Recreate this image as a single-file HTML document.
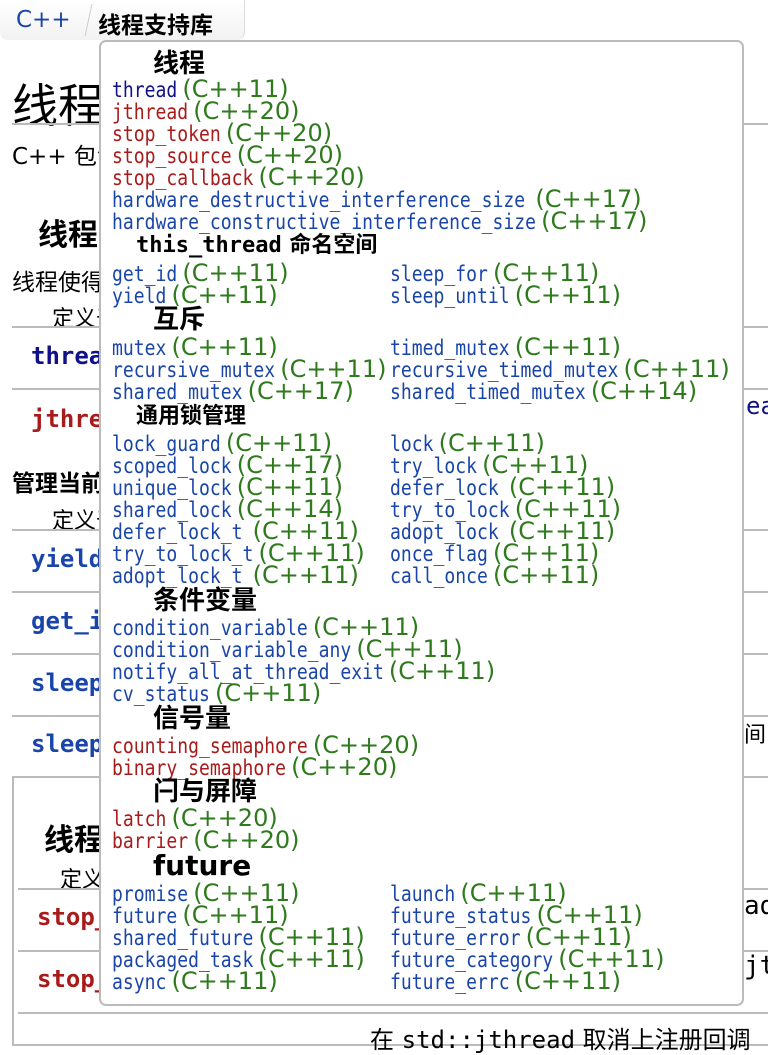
<!DOCTYPE html>
<html><head><meta charset="utf-8">
<style>
*{margin:0;padding:0;box-sizing:border-box}
body{width:768px;height:1030px;overflow:hidden;background:#fff;position:relative;font-family:"DejaVu Sans","Noto Sans CJK SC",sans-serif;color:#000}
.a{position:absolute;white-space:nowrap}
.hl{position:absolute;height:2px;background:#bbb}
.bm{font-family:"DejaVu Sans Mono",monospace;font-weight:bold;font-size:24px}
#pop{position:absolute;left:99px;top:40px;width:645px;height:966px;background:#fff;border:2px solid #bbb;border-radius:7px}
.r{position:absolute;height:22px;line-height:22px;white-space:nowrap}
.m{display:inline-block;font-family:"DejaVu Sans Mono",monospace;font-size:21px;color:#1a45a8;transform:scaleX(0.86);transform-origin:0 50%;margin-right:calc(var(--n) * -1.77px)}
.m.d{color:#101088}
.m.red{color:#a81b1b}
.g{font-family:"DejaVu Sans",sans-serif;font-size:24px;color:#2e7a1c}
.h{position:absolute;font-weight:bold;font-family:"DejaVu Sans","Noto Sans CJK SC",sans-serif;line-height:26px;white-space:nowrap}
</style></head><body>
<!-- breadcrumb tab -->
<div class="a" style="left:0;top:0;width:245px;height:40px;background:linear-gradient(#fff,#f2f2f2);border-radius:0 0 8px 8px;border-right:1px solid #ddd"></div>
<div class="a" style="left:16px;top:7px;font-size:23px;color:#1a45a8">C++</div>
<div class="a" style="left:88px;top:4px;width:1px;height:32px;background:#ccc;transform:skewX(-12deg)"></div>
<div class="a" style="left:98px;top:6px;font-size:23px;font-weight:bold">线程支持库</div>

<!-- background page -->
<div class="a" style="left:12px;top:70px;font-size:46px">线程支持库</div>
<div class="hl" style="left:12px;top:123px;width:756px"></div>
<div class="a" style="left:12px;top:137px;font-size:23px">C++ 包含线程</div>
<div class="a" style="left:38px;top:210px;font-size:30px;font-weight:bold">线程</div>
<div class="a" style="left:12px;top:263px;font-size:23px">线程使得程序</div>
<div class="a" style="left:52px;top:301px;font-size:22px">定义于头文件</div>
<div class="hl" style="left:12px;top:326px;width:756px"></div>
<div class="a bm" style="left:31px;top:342px;color:#101088">thread</div>
<div class="hl" style="left:12px;top:388px;width:756px"></div>
<div class="a bm" style="left:31px;top:405px;color:#a81b1b">jthread</div>
<div class="a" style="left:746px;top:392px;font-size:24px;font-family:'DejaVu Sans Mono',monospace;color:#101088">ea</div>
<div class="a" style="left:12px;top:464px;font-size:23px;font-weight:bold">管理当前线程</div>
<div class="a" style="left:52px;top:503px;font-size:22px">定义于头文件</div>
<div class="hl" style="left:12px;top:529px;width:756px"></div>
<div class="a bm" style="left:31px;top:545px;color:#1a45a8">yield</div>
<div class="hl" style="left:12px;top:591px;width:756px"></div>
<div class="a bm" style="left:31px;top:607px;color:#1a45a8">get_id</div>
<div class="hl" style="left:12px;top:653px;width:756px"></div>
<div class="a bm" style="left:31px;top:669px;color:#1a45a8">sleep_for</div>
<div class="hl" style="left:12px;top:715px;width:756px"></div>
<div class="a bm" style="left:31px;top:730px;color:#1a45a8">sleep_until</div>
<div class="a" style="left:744px;top:717px;font-size:22px">间</div>
<div class="a" style="left:12px;top:776px;width:760px;height:270px;border:2px solid #bbb"></div>
<div class="a" style="left:44px;top:815px;font-size:30px;font-weight:bold">线程</div>
<div class="a" style="left:60px;top:862px;font-size:22px">定义</div>
<div class="hl" style="left:18px;top:888px;width:750px"></div>
<div class="a bm" style="left:37px;top:903px;color:#a81b1b">stop_token</div>
<div class="a" style="left:744px;top:891px;font-size:26px;font-family:'DejaVu Sans Mono',monospace">ad</div>
<div class="hl" style="left:18px;top:950px;width:750px"></div>
<div class="a bm" style="left:37px;top:965px;color:#a81b1b">stop_source</div>
<div class="a" style="left:744px;top:951px;font-size:26px;font-family:'DejaVu Sans Mono',monospace">jt</div>
<div class="hl" style="left:18px;top:1012px;width:750px"></div>
<div class="a" style="left:370px;top:1020px;font-size:24px">在 <span style="font-family:'DejaVu Sans Mono',monospace">std::jthread</span> 取消上注册回调</div>

<!-- popup -->
<div id="pop"></div>
<div class="h" style="left:153px;top:51px;font-size:26px">线程</div>
<div class="r" style="left:112px;top:78px"><span class="m d" style="--n:6">thread</span> <span class="g">(C++11)</span></div>
<div class="r" style="left:112px;top:100px"><span class="m red" style="--n:7">jthread</span> <span class="g">(C++20)</span></div>
<div class="r" style="left:112px;top:122px"><span class="m red" style="--n:10">stop_token</span> <span class="g">(C++20)</span></div>
<div class="r" style="left:112px;top:144px"><span class="m red" style="--n:11">stop_source</span> <span class="g">(C++20)</span></div>
<div class="r" style="left:112px;top:166px"><span class="m red" style="--n:13">stop_callback</span> <span class="g">(C++20)</span></div>
<div class="r" style="left:112px;top:188px"><span class="m" style="--n:38">hardware_destructive_interference_size</span>&nbsp; <span class="g">(C++17)</span></div>
<div class="r" style="left:112px;top:210px"><span class="m" style="--n:39">hardware_constructive_interference_size</span> <span class="g">(C++17)</span></div>
<div class="h" style="left:136px;top:233px;font-size:22px"><span style="font-family:'DejaVu Sans Mono',monospace">this_thread</span> 命名空间</div>
<div class="r" style="left:112px;top:262px"><span class="m" style="--n:6">get_id</span> <span class="g">(C++11)</span></div>
<div class="r" style="left:112px;top:284px"><span class="m" style="--n:5">yield</span> <span class="g">(C++11)</span></div>
<div class="r" style="left:390px;top:262px"><span class="m" style="--n:9">sleep_for</span> <span class="g">(C++11)</span></div>
<div class="r" style="left:390px;top:284px"><span class="m" style="--n:11">sleep_until</span> <span class="g">(C++11)</span></div>
<div class="h" style="left:153px;top:307px;font-size:26px">互斥</div>
<div class="r" style="left:112px;top:336px"><span class="m" style="--n:5">mutex</span> <span class="g">(C++11)</span></div>
<div class="r" style="left:112px;top:358px"><span class="m" style="--n:15">recursive_mutex</span> <span class="g">(C++11)</span></div>
<div class="r" style="left:112px;top:380px"><span class="m" style="--n:12">shared_mutex</span> <span class="g">(C++17)</span></div>
<div class="r" style="left:390px;top:336px"><span class="m" style="--n:11">timed_mutex</span> <span class="g">(C++11)</span></div>
<div class="r" style="left:390px;top:358px"><span class="m" style="--n:21">recursive_timed_mutex</span> <span class="g">(C++11)</span></div>
<div class="r" style="left:390px;top:380px"><span class="m" style="--n:18">shared_timed_mutex</span> <span class="g">(C++14)</span></div>
<div class="h" style="left:136px;top:404px;font-size:22px">通用锁管理</div>
<div class="r" style="left:112px;top:432px"><span class="m" style="--n:10">lock_guard</span> <span class="g">(C++11)</span></div>
<div class="r" style="left:112px;top:454px"><span class="m" style="--n:11">scoped_lock</span> <span class="g">(C++17)</span></div>
<div class="r" style="left:112px;top:476px"><span class="m" style="--n:11">unique_lock</span> <span class="g">(C++11)</span></div>
<div class="r" style="left:112px;top:498px"><span class="m" style="--n:11">shared_lock</span> <span class="g">(C++14)</span></div>
<div class="r" style="left:112px;top:520px"><span class="m" style="--n:12">defer_lock_t</span>&nbsp; <span class="g">(C++11)</span></div>
<div class="r" style="left:112px;top:542px"><span class="m" style="--n:13">try_to_lock_t</span> <span class="g">(C++11)</span></div>
<div class="r" style="left:112px;top:564px"><span class="m" style="--n:12">adopt_lock_t</span>&nbsp; <span class="g">(C++11)</span></div>
<div class="r" style="left:390px;top:432px"><span class="m" style="--n:4">lock</span> <span class="g">(C++11)</span></div>
<div class="r" style="left:390px;top:454px"><span class="m" style="--n:8">try_lock</span> <span class="g">(C++11)</span></div>
<div class="r" style="left:390px;top:476px"><span class="m" style="--n:10">defer_lock</span>&nbsp; <span class="g">(C++11)</span></div>
<div class="r" style="left:390px;top:498px"><span class="m" style="--n:11">try_to_lock</span> <span class="g">(C++11)</span></div>
<div class="r" style="left:390px;top:520px"><span class="m" style="--n:10">adopt_lock</span>&nbsp; <span class="g">(C++11)</span></div>
<div class="r" style="left:390px;top:542px"><span class="m" style="--n:9">once_flag</span> <span class="g">(C++11)</span></div>
<div class="r" style="left:390px;top:564px"><span class="m" style="--n:9">call_once</span> <span class="g">(C++11)</span></div>
<div class="h" style="left:153px;top:588px;font-size:26px">条件变量</div>
<div class="r" style="left:112px;top:616px"><span class="m" style="--n:18">condition_variable</span> <span class="g">(C++11)</span></div>
<div class="r" style="left:112px;top:638px"><span class="m" style="--n:22">condition_variable_any</span> <span class="g">(C++11)</span></div>
<div class="r" style="left:112px;top:660px"><span class="m" style="--n:25">notify_all_at_thread_exit</span> <span class="g">(C++11)</span></div>
<div class="r" style="left:112px;top:682px"><span class="m" style="--n:9">cv_status</span> <span class="g">(C++11)</span></div>
<div class="h" style="left:153px;top:706px;font-size:26px">信号量</div>
<div class="r" style="left:112px;top:734px"><span class="m red" style="--n:18">counting_semaphore</span> <span class="g">(C++20)</span></div>
<div class="r" style="left:112px;top:756px"><span class="m red" style="--n:16">binary_semaphore</span> <span class="g">(C++20)</span></div>
<div class="h" style="left:153px;top:779px;font-size:26px">闩与屏障</div>
<div class="r" style="left:112px;top:807px"><span class="m red" style="--n:5">latch</span> <span class="g">(C++20)</span></div>
<div class="r" style="left:112px;top:829px"><span class="m red" style="--n:7">barrier</span> <span class="g">(C++20)</span></div>
<div class="h" style="left:153px;top:853px;font-size:28px">future</div>
<div class="r" style="left:112px;top:882px"><span class="m" style="--n:7">promise</span> <span class="g">(C++11)</span></div>
<div class="r" style="left:112px;top:904px"><span class="m" style="--n:6">future</span> <span class="g">(C++11)</span></div>
<div class="r" style="left:112px;top:926px"><span class="m" style="--n:13">shared_future</span> <span class="g">(C++11)</span></div>
<div class="r" style="left:112px;top:948px"><span class="m" style="--n:13">packaged_task</span> <span class="g">(C++11)</span></div>
<div class="r" style="left:112px;top:970px"><span class="m" style="--n:5">async</span> <span class="g">(C++11)</span></div>
<div class="r" style="left:390px;top:882px"><span class="m" style="--n:6">launch</span> <span class="g">(C++11)</span></div>
<div class="r" style="left:390px;top:904px"><span class="m" style="--n:13">future_status</span> <span class="g">(C++11)</span></div>
<div class="r" style="left:390px;top:926px"><span class="m" style="--n:12">future_error</span> <span class="g">(C++11)</span></div>
<div class="r" style="left:390px;top:948px"><span class="m" style="--n:15">future_category</span> <span class="g">(C++11)</span></div>
<div class="r" style="left:390px;top:970px"><span class="m" style="--n:11">future_errc</span> <span class="g">(C++11)</span></div>
</body></html>
